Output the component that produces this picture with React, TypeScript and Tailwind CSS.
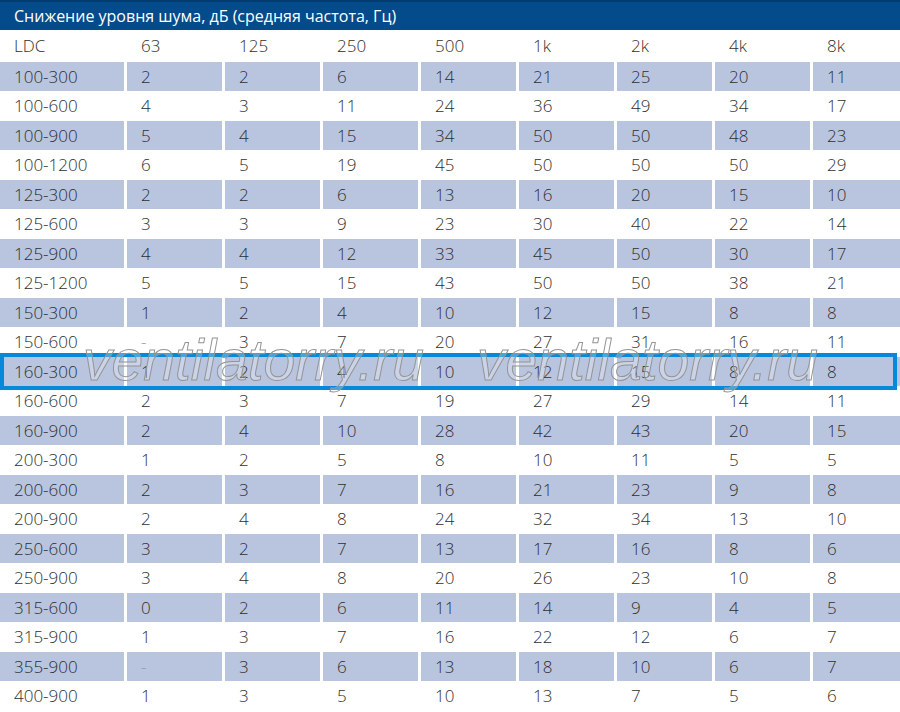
import React from "react";

const FREQS = ["63", "125", "250", "500", "1k", "2k", "4k", "8k"];

const ROWS: [string, string[]][] = [
  ["100-300", ["2", "2", "6", "14", "21", "25", "20", "11"]],
  ["100-600", ["4", "3", "11", "24", "36", "49", "34", "17"]],
  ["100-900", ["5", "4", "15", "34", "50", "50", "48", "23"]],
  ["100-1200", ["6", "5", "19", "45", "50", "50", "50", "29"]],
  ["125-300", ["2", "2", "6", "13", "16", "20", "15", "10"]],
  ["125-600", ["3", "3", "9", "23", "30", "40", "22", "14"]],
  ["125-900", ["4", "4", "12", "33", "45", "50", "30", "17"]],
  ["125-1200", ["5", "5", "15", "43", "50", "50", "38", "21"]],
  ["150-300", ["1", "2", "4", "10", "12", "15", "8", "8"]],
  ["150-600", ["-", "3", "7", "20", "27", "31", "16", "11"]],
  ["160-300", ["1", "2", "4", "10", "12", "15", "8", "8"]],
  ["160-600", ["2", "3", "7", "19", "27", "29", "14", "11"]],
  ["160-900", ["2", "4", "10", "28", "42", "43", "20", "15"]],
  ["200-300", ["1", "2", "5", "8", "10", "11", "5", "5"]],
  ["200-600", ["2", "3", "7", "16", "21", "23", "9", "8"]],
  ["200-900", ["2", "4", "8", "24", "32", "34", "13", "10"]],
  ["250-600", ["3", "2", "7", "13", "17", "16", "8", "6"]],
  ["250-900", ["3", "4", "8", "20", "26", "23", "10", "8"]],
  ["315-600", ["0", "2", "6", "11", "14", "9", "4", "5"]],
  ["315-900", ["1", "3", "7", "16", "22", "12", "6", "7"]],
  ["355-900", ["-", "3", "6", "13", "18", "10", "6", "7"]],
  ["400-900", ["1", "3", "5", "10", "13", "7", "5", "6"]],
];

const HIGHLIGHT = "160-300";

const Row = ({ label, cells, shaded }: { label: string; cells: string[]; shaded: boolean }) => {
  const cellCls = `flex items-center pl-[14px] ${shaded ? "bg-[#b9c5df]" : ""}`;
  return (
    <div className="relative grid h-[28.5px] grid-cols-[124px_repeat(8,95px)] gap-x-[3px]">
      <div className={cellCls}>{label}</div>
      {cells.map((c, i) => (
        <div key={i} className={cellCls}>
          <span className={c === "-" ? "text-[#9a9a9a]" : ""}>{c}</span>
        </div>
      ))}
      {label === HIGHLIGHT && (
        <div className="pointer-events-none absolute -top-[4px] -bottom-[4px] left-0 w-[897px] border-4 border-[#0689d6]" />
      )}
    </div>
  );
};

const Watermark = ({ left }: { left: number }) => (
  <span
    className="pointer-events-none absolute top-[332px] text-[57px] italic leading-none text-[rgba(255,255,255,0.25)] [-webkit-text-stroke:1px_#949494] [font-family:'Liberation_Sans',Arial,sans-serif]"
    style={{ left }}
  >
    ventilatorry.ru
  </span>
);

export default function App() {
  return (
    <div className="relative h-[712px] w-[900px] overflow-hidden bg-white text-[17px] font-light text-[#2f2f2f] [font-family:'Open_Sans',sans-serif]">
      {/* title bar */}
      <div className="flex h-[30px] items-center border-t-2 border-[#023b70] bg-[#034b8b] pl-[14px] text-[16px] font-normal text-white">
        Снижение уровня шума, дБ (средняя частота, Гц)
      </div>

      <div className="flex w-[908px] flex-col gap-y-[1px]">
        <div className="grid h-[31px] grid-cols-[124px_repeat(8,95px)] gap-x-[3px]">
          <div className="flex items-center pl-[14px]">LDC</div>
          {FREQS.map((f) => (
            <div key={f} className="flex items-center pl-[14px]">
              {f}
            </div>
          ))}
        </div>
        {ROWS.map(([label, cells], i) => (
          <Row key={label} label={label} cells={cells} shaded={i % 2 === 0} />
        ))}
      </div>

      <Watermark left={83} />
      <Watermark left={477} />
    </div>
  );
}
